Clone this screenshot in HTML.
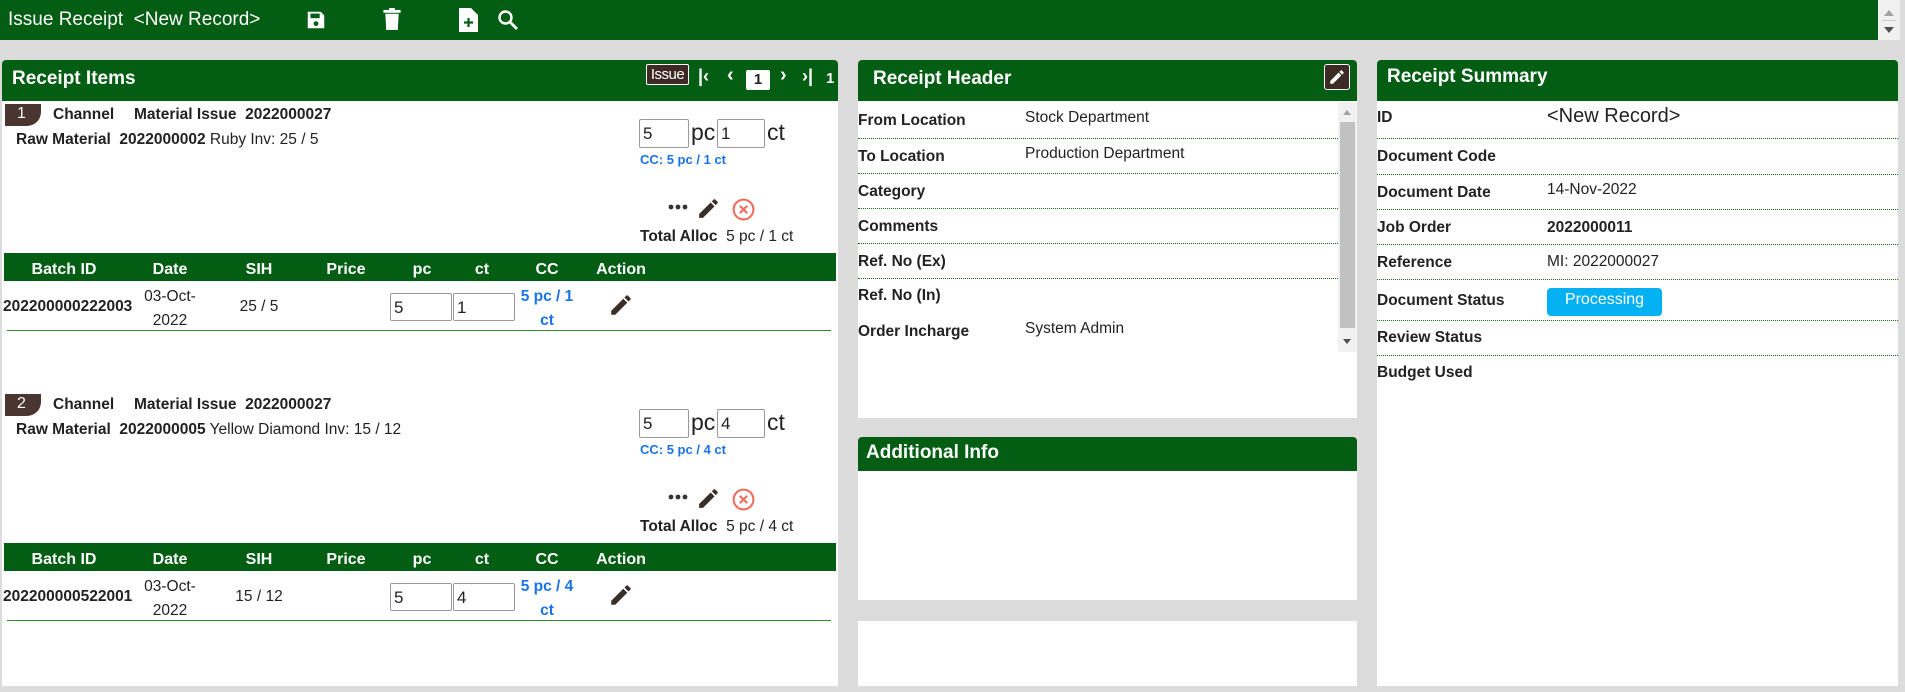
<!DOCTYPE html>
<html><head><meta charset="utf-8"><style>
*{box-sizing:border-box;margin:0;padding:0}
body{width:1905px;height:692px;background:#dcdcdc;font-family:"Liberation Sans",Arial,sans-serif;color:#222;position:relative;overflow:hidden;font-size:15.5px}
.a{position:absolute;white-space:nowrap}
.g{background:#035d12}
.w{background:#fff}
.b{font-weight:bold}
.hdr{color:#fff;font-weight:bold;font-size:19px}
.inp{position:absolute;border:1px solid #999;border-radius:2px;background:#fff;font-size:17px;padding-left:3px;line-height:27px}
.blue{color:#1a73e8;font-weight:bold}
.th{color:#fff;font-weight:bold;font-size:16px;transform:translateX(-50%)}
.c{transform:translateX(-50%);text-align:center}
.dl{position:absolute;height:0;border-top:1px dotted #1b6b1b}
</style></head><body>
<!-- top bar -->
<div class="a g" style="left:0;top:0;width:1878px;height:40px"></div>
<div class="a" style="left:8px;top:9px;color:#fff;font-size:19px">Issue Receipt&nbsp; &lt;New Record&gt;</div>
<svg class="a" style="left:305px;top:9px" width="22" height="22" viewBox="0 0 24 24"><path fill="#fff" d="M3 3h14l4 4v14H3z"/><rect x="6" y="5" width="10" height="5" fill="#035d12"/><circle cx="12" cy="16" r="2.6" fill="#035d12"/></svg>
<svg class="a" style="left:382px;top:8px" width="20" height="23" viewBox="0 0 20 24"><rect x="1" y="2" width="18" height="3" fill="#fff"/><rect x="7" y="0" width="6" height="3" fill="#fff"/><path fill="#fff" d="M3 6h14l-1 17H4z"/></svg>
<svg class="a" style="left:459px;top:8px" width="19" height="24" viewBox="0 0 19 24"><path fill="#fff" d="M0 0h12l7 7v17H0z"/><path d="M9.5 10v9M5 14.5h9" stroke="#035d12" stroke-width="2.2"/></svg>
<svg class="a" style="left:497px;top:9px" width="22" height="22" viewBox="0 0 22 22"><circle cx="8.5" cy="8.5" r="6" fill="none" stroke="#fff" stroke-width="2.4"/><path d="M13 13l7 7" stroke="#fff" stroke-width="2.8"/></svg>
<div class="a" style="left:1878px;top:0;width:22px;height:40px;background:#f1f1f1"></div>
<div class="a" style="left:1884px;top:10px;border:5px solid transparent;border-bottom:6px solid #a3a3a3;border-top:0"></div>
<div class="a" style="left:1882px;top:20px;width:14px;height:1px;background:#ccc"></div>
<div class="a" style="left:1884px;top:27px;border:5px solid transparent;border-top:6px solid #505050;border-bottom:0"></div>

<!-- Left panel -->
<div class="a w" style="left:2px;top:60px;width:836px;height:626px;border-radius:4px 4px 0 0"></div>
<div class="a g" style="left:2px;top:60px;width:836px;height:41px;border-radius:4px 4px 0 0"></div>
<div class="a hdr" style="left:12px;top:68px">Receipt Items</div>
<div class="a" style="left:646px;top:64px;width:43px;height:21px;background:#3e2a24;border:1px solid #fff;border-radius:2px;color:#fff;font-size:15px;text-align:center;line-height:19px;letter-spacing:-0.5px">Issue</div>
<div class="a" style="left:698px;top:66px;color:#fff;font-size:18px;font-weight:bold">|‹</div>
<div class="a" style="left:727px;top:64px;color:#fff;font-size:20px;font-weight:bold">‹</div>
<div class="a" style="left:746px;top:70px;width:24px;height:20px;background:#fff;border-radius:2px;color:#222;text-align:center;font-size:15px;font-weight:bold;line-height:20px">1</div>
<div class="a" style="left:780px;top:64px;color:#fff;font-size:20px;font-weight:bold">›</div>
<div class="a" style="left:802px;top:66px;color:#fff;font-size:18px;font-weight:bold">›|</div>
<div class="a" style="left:826px;top:70px;color:#fff;font-size:15px;font-weight:bold">1</div>

<div>
<div class="a" style="left:5px;top:104px;width:36px;height:22px;background:#4a3530;border-radius:0 0 14px 0;color:#fff;font-size:16px;padding-left:12px;line-height:20px">1</div>
<div class="a b" style="left:53px;top:106px">Channel</div>
<div class="a b" style="left:134px;top:106px">Material Issue&nbsp; 2022000027</div>
<div class="a" style="left:16px;top:131px"><b>Raw Material&nbsp; 2022000002</b> Ruby Inv: 25 / 5</div>
<div class="inp" style="left:639px;top:119px;width:50px;height:29px">5</div>
<div class="a" style="left:691px;top:119px;font-size:23px">pc</div>
<div class="inp" style="left:717px;top:119px;width:48px;height:29px">1</div>
<div class="a" style="left:767px;top:119px;font-size:23px">ct</div>
<div class="a blue" style="left:640px;top:152px;font-size:13px">CC: 5 pc / 1 ct</div>
<svg class="a" style="left:668px;top:204px" width="20" height="6"><circle cx="3" cy="3" r="2.4" fill="#333"/><circle cx="10" cy="3" r="2.4" fill="#333"/><circle cx="17" cy="3" r="2.4" fill="#333"/></svg>
<svg class="a" style="left:696px;top:196px" width="25" height="25" viewBox="0 0 24 24"><path fill="#3a2e2a" d="M3 17.3V21h3.7L17.8 9.9l-3.7-3.7zM20.7 7c.4-.4.4-1 0-1.4l-2.3-2.3c-.4-.4-1-.4-1.4 0l-1.8 1.8 3.7 3.7z"/></svg>
<svg class="a" style="left:731px;top:197px" width="25" height="25" viewBox="0 0 24 24"><circle cx="12" cy="12" r="9.5" fill="none" stroke="#f26b5b" stroke-width="2"/><path d="M8.5 8.5l7 7M15.5 8.5l-7 7" stroke="#f26b5b" stroke-width="2"/></svg>
<div class="a" style="left:640px;top:228px"><b>Total Alloc</b>&nbsp; 5 pc / 1 ct</div>
<div class="a g" style="left:4px;top:253px;width:832px;height:28px"></div>
<div class="a th" style="left:64px;top:261px">Batch ID</div>
<div class="a th" style="left:170px;top:261px">Date</div>
<div class="a th" style="left:259px;top:261px">SIH</div>
<div class="a th" style="left:346px;top:261px">Price</div>
<div class="a th" style="left:422px;top:261px">pc</div>
<div class="a th" style="left:482px;top:261px">ct</div>
<div class="a th" style="left:547px;top:261px">CC</div>
<div class="a th" style="left:621px;top:261px">Action</div>
<div class="a b" style="left:3px;top:298px">202200000222003</div>
<div class="a c" style="left:170px;top:285px;line-height:24px">03-Oct-<br>2022</div>
<div class="a c" style="left:259px;top:298px">25 / 5</div>
<div class="inp" style="left:390px;top:293px;width:62px;height:28px">5</div>
<div class="inp" style="left:453px;top:293px;width:62px;height:28px">1</div>
<div class="a c blue" style="left:547px;top:285px;line-height:24px">5 pc / 1<br>ct</div>
<svg class="a" style="left:608px;top:292px" width="26" height="26" viewBox="0 0 24 24"><path fill="#3a2e2a" d="M3 17.3V21h3.7L17.8 9.9l-3.7-3.7zM20.7 7c.4-.4.4-1 0-1.4l-2.3-2.3c-.4-.4-1-.4-1.4 0l-1.8 1.8 3.7 3.7z"/></svg>
<div class="a" style="left:7px;top:330px;width:824px;height:1px;background:#2e8b2e"></div>
</div>

<div style="position:absolute;left:0;top:290px;width:1905px;height:1px">
<div class="a" style="left:5px;top:104px;width:36px;height:22px;background:#4a3530;border-radius:0 0 14px 0;color:#fff;font-size:16px;padding-left:12px;line-height:20px">2</div>
<div class="a b" style="left:53px;top:106px">Channel</div>
<div class="a b" style="left:134px;top:106px">Material Issue&nbsp; 2022000027</div>
<div class="a" style="left:16px;top:131px"><b>Raw Material&nbsp; 2022000005</b> Yellow Diamond Inv: 15 / 12</div>
<div class="inp" style="left:639px;top:119px;width:50px;height:29px">5</div>
<div class="a" style="left:691px;top:119px;font-size:23px">pc</div>
<div class="inp" style="left:717px;top:119px;width:48px;height:29px">4</div>
<div class="a" style="left:767px;top:119px;font-size:23px">ct</div>
<div class="a blue" style="left:640px;top:152px;font-size:13px">CC: 5 pc / 4 ct</div>
<svg class="a" style="left:668px;top:204px" width="20" height="6"><circle cx="3" cy="3" r="2.4" fill="#333"/><circle cx="10" cy="3" r="2.4" fill="#333"/><circle cx="17" cy="3" r="2.4" fill="#333"/></svg>
<svg class="a" style="left:696px;top:196px" width="25" height="25" viewBox="0 0 24 24"><path fill="#3a2e2a" d="M3 17.3V21h3.7L17.8 9.9l-3.7-3.7zM20.7 7c.4-.4.4-1 0-1.4l-2.3-2.3c-.4-.4-1-.4-1.4 0l-1.8 1.8 3.7 3.7z"/></svg>
<svg class="a" style="left:731px;top:197px" width="25" height="25" viewBox="0 0 24 24"><circle cx="12" cy="12" r="9.5" fill="none" stroke="#f26b5b" stroke-width="2"/><path d="M8.5 8.5l7 7M15.5 8.5l-7 7" stroke="#f26b5b" stroke-width="2"/></svg>
<div class="a" style="left:640px;top:228px"><b>Total Alloc</b>&nbsp; 5 pc / 4 ct</div>
<div class="a g" style="left:4px;top:253px;width:832px;height:28px"></div>
<div class="a th" style="left:64px;top:261px">Batch ID</div>
<div class="a th" style="left:170px;top:261px">Date</div>
<div class="a th" style="left:259px;top:261px">SIH</div>
<div class="a th" style="left:346px;top:261px">Price</div>
<div class="a th" style="left:422px;top:261px">pc</div>
<div class="a th" style="left:482px;top:261px">ct</div>
<div class="a th" style="left:547px;top:261px">CC</div>
<div class="a th" style="left:621px;top:261px">Action</div>
<div class="a b" style="left:3px;top:298px">202200000522001</div>
<div class="a c" style="left:170px;top:285px;line-height:24px">03-Oct-<br>2022</div>
<div class="a c" style="left:259px;top:298px">15 / 12</div>
<div class="inp" style="left:390px;top:293px;width:62px;height:28px">5</div>
<div class="inp" style="left:453px;top:293px;width:62px;height:28px">4</div>
<div class="a c blue" style="left:547px;top:285px;line-height:24px">5 pc / 4<br>ct</div>
<svg class="a" style="left:608px;top:292px" width="26" height="26" viewBox="0 0 24 24"><path fill="#3a2e2a" d="M3 17.3V21h3.7L17.8 9.9l-3.7-3.7zM20.7 7c.4-.4.4-1 0-1.4l-2.3-2.3c-.4-.4-1-.4-1.4 0l-1.8 1.8 3.7 3.7z"/></svg>
<div class="a" style="left:7px;top:330px;width:824px;height:1px;background:#2e8b2e"></div>
</div>

<!-- Middle panel -->
<div class="a w" style="left:858px;top:60px;width:499px;height:358px;border-radius:4px 4px 0 0"></div>
<div class="a g" style="left:858px;top:60px;width:499px;height:41px;border-radius:4px 4px 0 0"></div>
<div class="a hdr" style="left:873px;top:68px">Receipt Header</div>
<div class="a" style="left:1324px;top:64px;width:26px;height:26px;background:#3e2a24;border:1px solid #fff;border-radius:3px"></div>
<svg class="a" style="left:1328px;top:68px" width="18" height="18" viewBox="0 0 24 24"><path fill="#fff" d="M3 17.3V21h3.7L17.8 9.9l-3.7-3.7zM20.7 7c.4-.4.4-1 0-1.4l-2.3-2.3c-.4-.4-1-.4-1.4 0l-1.8 1.8 3.7 3.7z"/></svg>
<div class="a" style="left:1338px;top:102px;width:19px;height:250px;background:#f1f1f1"></div>
<div class="a" style="left:1340px;top:122px;width:15px;height:206px;background:#c1c1c1"></div>
<div class="a" style="left:1343px;top:110px;border:4px solid transparent;border-bottom:5px solid #a3a3a3;border-top:0"></div>
<div class="a" style="left:1343px;top:339px;border:4px solid transparent;border-top:5px solid #505050;border-bottom:0"></div>
<div class="a b" style="left:858px;top:112px">From Location</div><div class="a" style="left:1025px;top:109px">Stock Department</div>
<div class="dl" style="left:858px;top:138px;width:480px"></div>
<div class="a b" style="left:858px;top:148px">To Location</div><div class="a" style="left:1025px;top:145px">Production Department</div>
<div class="dl" style="left:858px;top:173px;width:480px"></div>
<div class="a b" style="left:858px;top:183px">Category</div>
<div class="dl" style="left:858px;top:208px;width:480px"></div>
<div class="a b" style="left:858px;top:218px">Comments</div>
<div class="dl" style="left:858px;top:243px;width:480px"></div>
<div class="a b" style="left:858px;top:253px">Ref. No (Ex)</div>
<div class="dl" style="left:858px;top:278px;width:480px"></div>
<div class="a b" style="left:858px;top:287px">Ref. No (In)</div>
<div class="a b" style="left:858px;top:323px">Order Incharge</div><div class="a" style="left:1025px;top:320px">System Admin</div>

<div class="a w" style="left:858px;top:437px;width:499px;height:163px;border-radius:4px 4px 0 0"></div>
<div class="a g" style="left:858px;top:437px;width:499px;height:34px;border-radius:4px 4px 0 0"></div>
<div class="a hdr" style="left:866px;top:442px">Additional Info</div>
<div class="a w" style="left:858px;top:621px;width:499px;height:65px"></div>

<!-- Right panel -->
<div class="a w" style="left:1377px;top:60px;width:521px;height:626px;border-radius:4px 4px 0 0"></div>
<div class="a g" style="left:1377px;top:60px;width:521px;height:41px;border-radius:4px 4px 0 0"></div>
<div class="a hdr" style="left:1387px;top:66px">Receipt Summary</div>
<div class="a b" style="left:1377px;top:109px">ID</div><div class="a" style="left:1547px;top:105px;font-size:20px">&lt;New Record&gt;</div>
<div class="dl" style="left:1377px;top:138px;width:521px"></div>
<div class="a b" style="left:1377px;top:148px">Document Code</div>
<div class="dl" style="left:1377px;top:174px;width:521px"></div>
<div class="a b" style="left:1377px;top:184px">Document Date</div><div class="a" style="left:1547px;top:181px">14-Nov-2022</div>
<div class="dl" style="left:1377px;top:209px;width:521px"></div>
<div class="a b" style="left:1377px;top:219px">Job Order</div><div class="a b" style="left:1547px;top:219px">2022000011</div>
<div class="dl" style="left:1377px;top:244px;width:521px"></div>
<div class="a b" style="left:1377px;top:254px">Reference</div><div class="a" style="left:1547px;top:253px">MI: 2022000027</div>
<div class="dl" style="left:1377px;top:279px;width:521px"></div>
<div class="a b" style="left:1377px;top:292px">Document Status</div>
<div class="a" style="left:1547px;top:288px;width:115px;height:28px;background:#03b1f3;border-radius:4px;color:#fff;font-size:16px;text-align:center;line-height:24px">Processing</div>
<div class="dl" style="left:1377px;top:320px;width:521px"></div>
<div class="a b" style="left:1377px;top:329px">Review Status</div>
<div class="dl" style="left:1377px;top:355px;width:521px"></div>
<div class="a b" style="left:1377px;top:364px">Budget Used</div>
</body></html>
